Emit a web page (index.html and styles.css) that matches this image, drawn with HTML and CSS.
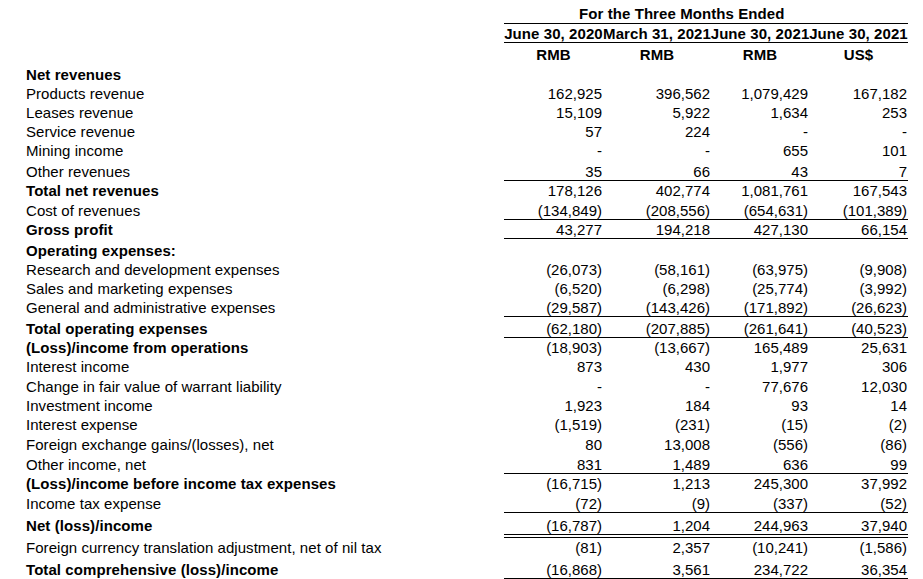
FILE: index.html
```html
<!DOCTYPE html>
<html lang="en">
<head>
<meta charset="utf-8">
<title>Condensed Consolidated Statements of Comprehensive (Loss)/Income</title>
<link rel="stylesheet" href="styles.css">
</head>
<body>
<div class="sheet">
  <div class="row h24 head1">
    <div class="label"></div>
    <div class="period b">For the Three Months Ended</div>
  </div>
  <div class="row h19 head rule">
    <div class="label"></div>
    <div class="num c b">June 30, 2020</div>
    <div class="num c b">March 31, 2021</div>
    <div class="num c b">June 30, 2021</div>
    <div class="num c b">June 30, 2021</div>
  </div>
  <div class="row h21 head">
    <div class="label"></div>
    <div class="num c b">RMB</div>
    <div class="num c b">RMB</div>
    <div class="num c b">RMB</div>
    <div class="num c b">US$</div>
  </div>
  <div class="row h20"><div class="label b">Net revenues</div><div class="num"></div><div class="num"></div><div class="num"></div><div class="num"></div></div>
  <div class="row h19"><div class="label">Products revenue</div><div class="num">162,925</div><div class="num">396,562</div><div class="num">1,079,429</div><div class="num">167,182</div></div>
  <div class="row h19"><div class="label">Leases revenue</div><div class="num">15,109</div><div class="num">5,922</div><div class="num">1,634</div><div class="num">253</div></div>
  <div class="row h19"><div class="label">Service revenue</div><div class="num">57</div><div class="num">224</div><div class="num">-</div><div class="num">-</div></div>
  <div class="row h19"><div class="label">Mining income</div><div class="num">-</div><div class="num">-</div><div class="num">655</div><div class="num">101</div></div>
  <div class="row h21 rule"><div class="label">Other revenues</div><div class="num">35</div><div class="num">66</div><div class="num">43</div><div class="num">7</div></div>
  <div class="row h19"><div class="label b">Total net revenues</div><div class="num">178,126</div><div class="num">402,774</div><div class="num">1,081,761</div><div class="num">167,543</div></div>
  <div class="row h20 rule"><div class="label">Cost of revenues</div><div class="num">(134,849)</div><div class="num">(208,556)</div><div class="num">(654,631)</div><div class="num">(101,389)</div></div>
  <div class="row h19 rule"><div class="label b">Gross profit</div><div class="num">43,277</div><div class="num">194,218</div><div class="num">427,130</div><div class="num">66,154</div></div>
  <div class="row h21"><div class="label b">Operating expenses:</div><div class="num"></div><div class="num"></div><div class="num"></div><div class="num"></div></div>
  <div class="row h19"><div class="label">Research and development expenses</div><div class="num">(26,073)</div><div class="num">(58,161)</div><div class="num">(63,975)</div><div class="num">(9,908)</div></div>
  <div class="row h19"><div class="label">Sales and marketing expenses</div><div class="num">(6,520)</div><div class="num">(6,298)</div><div class="num">(25,774)</div><div class="num">(3,992)</div></div>
  <div class="row h19 rule"><div class="label">General and administrative expenses</div><div class="num">(29,587)</div><div class="num">(143,426)</div><div class="num">(171,892)</div><div class="num">(26,623)</div></div>
  <div class="row h21 rule"><div class="label b">Total operating expenses</div><div class="num">(62,180)</div><div class="num">(207,885)</div><div class="num">(261,641)</div><div class="num">(40,523)</div></div>
  <div class="row h19"><div class="label b">(Loss)/income from operations</div><div class="num">(18,903)</div><div class="num">(13,667)</div><div class="num">165,489</div><div class="num">25,631</div></div>
  <div class="row h19"><div class="label">Interest income</div><div class="num">873</div><div class="num">430</div><div class="num">1,977</div><div class="num">306</div></div>
  <div class="row h20"><div class="label">Change in fair value of warrant liability</div><div class="num">-</div><div class="num">-</div><div class="num">77,676</div><div class="num">12,030</div></div>
  <div class="row h19"><div class="label">Investment income</div><div class="num">1,923</div><div class="num">184</div><div class="num">93</div><div class="num">14</div></div>
  <div class="row h19"><div class="label">Interest expense</div><div class="num">(1,519)</div><div class="num">(231)</div><div class="num">(15)</div><div class="num">(2)</div></div>
  <div class="row h20"><div class="label">Foreign exchange gains/(losses), net</div><div class="num">80</div><div class="num">13,008</div><div class="num">(556)</div><div class="num">(86)</div></div>
  <div class="row h20 rule"><div class="label">Other income, net</div><div class="num">831</div><div class="num">1,489</div><div class="num">636</div><div class="num">99</div></div>
  <div class="row h19"><div class="label b">(Loss)/income before income tax expenses</div><div class="num">(16,715)</div><div class="num">1,213</div><div class="num">245,300</div><div class="num">37,992</div></div>
  <div class="row h20 rule"><div class="label">Income tax expense</div><div class="num">(72)</div><div class="num">(9)</div><div class="num">(337)</div><div class="num">(52)</div></div>
  <div class="row h22 rule"><div class="label b">Net (loss)/income</div><div class="num">(16,787)</div><div class="num">1,204</div><div class="num">244,963</div><div class="num">37,940</div></div>
  <div class="row h20 overrule"><div class="label">Foreign currency translation adjustment, net of nil tax</div><div class="num">(81)</div><div class="num">2,357</div><div class="num">(10,241)</div><div class="num">(1,586)</div></div>
  <div class="row h22 rule"><div class="label b">Total comprehensive (loss)/income</div><div class="num">(16,868)</div><div class="num">3,561</div><div class="num">234,722</div><div class="num">36,354</div></div>
</div>
</body>
</html>
```

FILE: styles.css
```css
html, body {
  margin: 0;
  padding: 0;
  background: #ffffff;
}

body {
  font-family: "Liberation Sans", Arial, sans-serif;
  font-size: 15px;
  color: #000000;
}

.sheet {
  padding-left: 26px;
  width: 882px;
}

.row {
  display: grid;
  grid-template-columns: 478px 99px 108px 98px 99px;
}

.row > div {
  display: flex;
  align-items: flex-end;
  line-height: 17px;
  border-bottom: 1px solid transparent;
  white-space: nowrap;
  box-sizing: border-box;
}

.h19 { height: 19px; }
.h20 { height: 20px; }
.h21 { height: 21px; }
.h22 { height: 22px; }
.h24 { height: 24px; }

.label {
  letter-spacing: 0.05px;
}

.num {
  justify-content: flex-end;
  padding-right: 1px;
}

.num.c {
  justify-content: center;
  padding-right: 0;
}

.b {
  font-weight: bold;
  letter-spacing: 0.08px;
}

.period {
  grid-column: span 4;
  padding-left: 75px;
  padding-bottom: 1px;
  border-bottom-color: #000000 !important;
}

.rule > .num {
  border-bottom-color: #000000;
}

.overrule {
  margin-top: 2px;
}

.overrule > .num {
  border-top: 1px solid #000000;
}
```
